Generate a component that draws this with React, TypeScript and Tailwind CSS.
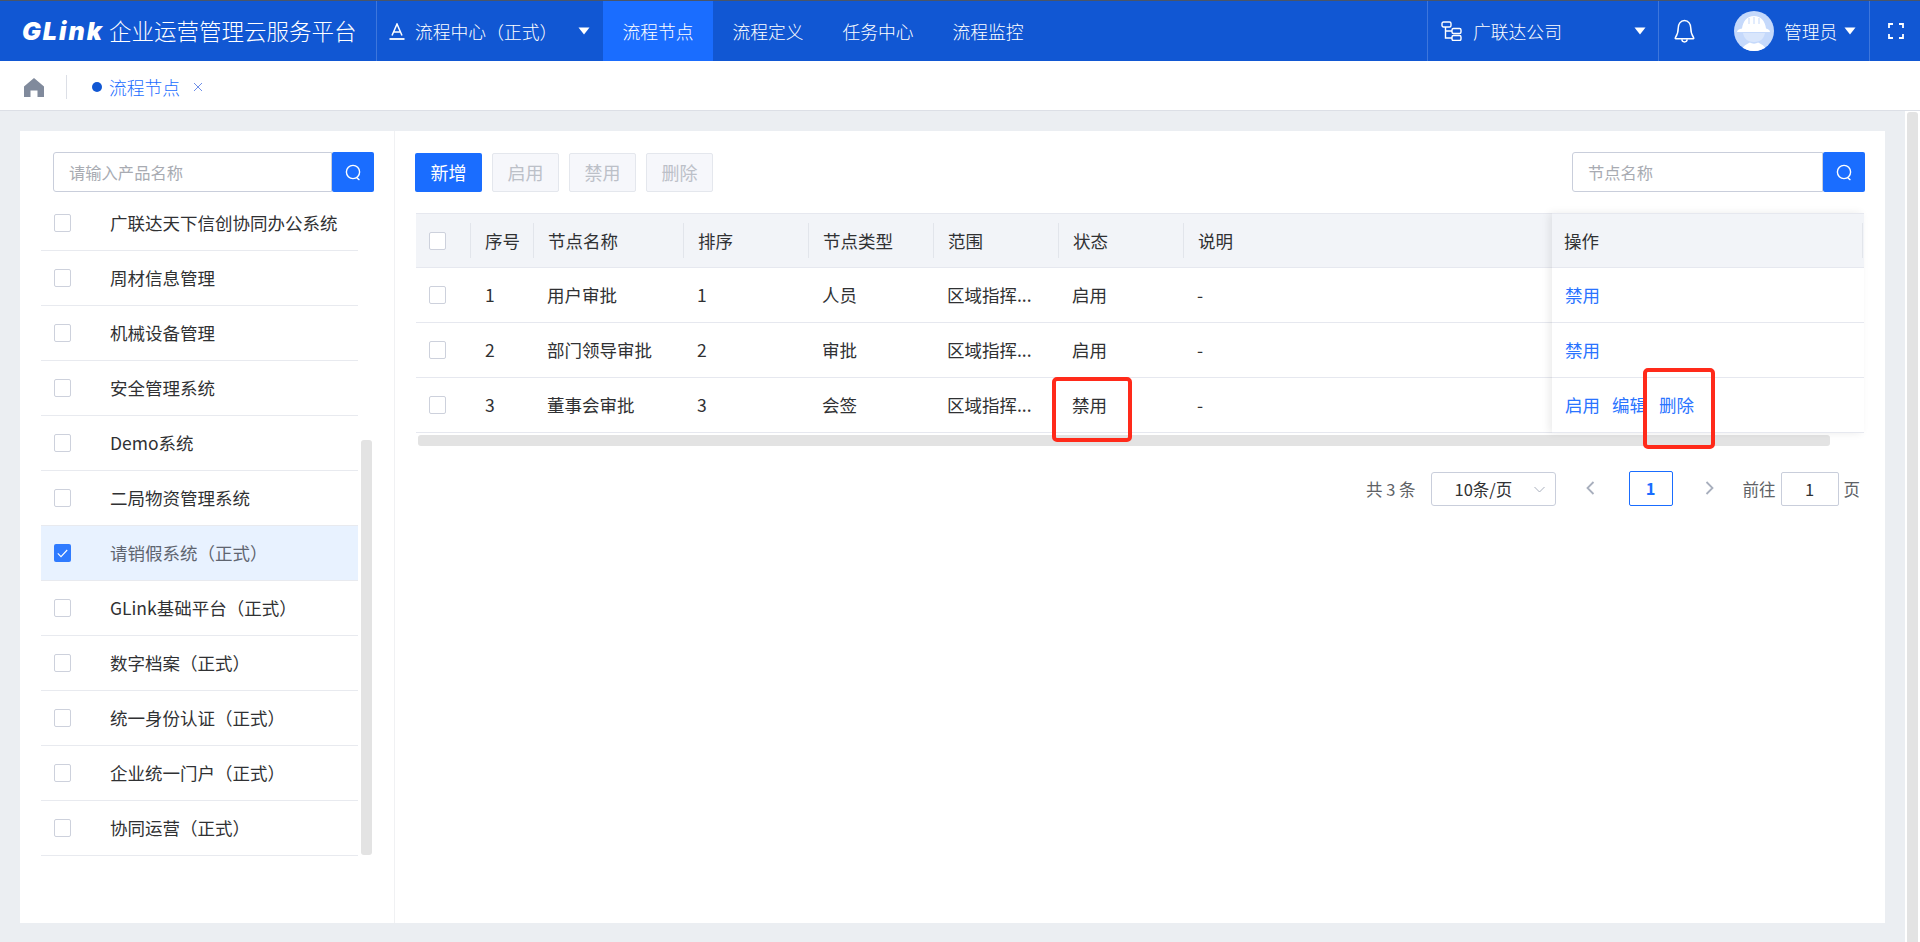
const PRODUCTS = [
  '广联达天下信创协同办公系统',
  '周材信息管理',
  '机械设备管理',
  '安全管理系统',
  'Demo系统',
  '二局物资管理系统',
  '请销假系统（正式）',
  'GLink基础平台（正式）',
  '数字档案（正式）',
  '统一身份认证（正式）',
  '企业统一门户（正式）',
  '协同运营（正式）',
];

const COLUMNS = ['序号', '节点名称', '排序', '节点类型', '范围', '状态', '说明'];

const ROWS = [
  { id: '1', name: '用户审批', sort: '1', type: '人员', scope: '区域指挥...', status: '启用', note: '-', actions: ['禁用'] },
  { id: '2', name: '部门领导审批', sort: '2', type: '审批', scope: '区域指挥...', status: '启用', note: '-', actions: ['禁用'] },
  { id: '3', name: '董事会审批', sort: '3', type: '会签', scope: '区域指挥...', status: '禁用', note: '-', actions: ['启用', '编辑', '删除'] },
];

function Caret() {
  return (
    <svg width="12" height="8" viewBox="0 0 12 8" className="shrink-0">
      <path d="M0.5 0.5H11.5L6 7.5Z" fill="#fff" />
    </svg>
  );
}

function SearchIcon() {
  return (
    <svg width="17" height="17" viewBox="0 0 17 17" fill="none" stroke="#fff" strokeWidth="1.4">
      <circle cx="8" cy="8" r="6.6" />
      <path d="M11.8 13.8L14 15.6" strokeLinecap="round" />
    </svg>
  );
}

function Checkbox({ checked = false }: { checked?: boolean }) {
  if (checked) {
    return (
      <span className="flex h-[18px] w-[17px] shrink-0 items-center justify-center rounded-[2px] bg-[#2f7bff]">
        <svg width="11" height="9" viewBox="0 0 11 9" fill="none" stroke="#fff" strokeWidth="1.1">
          <path d="M0.8 4.4L4 7.6L10.2 1" />
        </svg>
      </span>
    );
  }
  return <span className="block h-[18px] w-[17px] shrink-0 rounded-[2px] border border-[#cdd1dc] bg-white" />;
}

function SearchBox({ placeholder, className }: { placeholder: string; className: string }) {
  return (
    <div className={`flex h-10 ${className}`}>
      <div className="flex flex-1 items-center rounded-l-[3px] border border-[#c9cedb] bg-white pl-[15px] text-[16.3px] text-[#a8abb2]">
        {placeholder}
      </div>
      <button className="flex w-[42px] items-center justify-center rounded-[2px] bg-[#1a6dff]">
        <SearchIcon />
      </button>
    </div>
  );
}

function ToolButton({ label, primary = false }: { label: string; primary?: boolean }) {
  return (
    <button
      className={
        primary
          ? 'h-[39px] w-[67px] rounded-[2px] bg-[#1a6dff] text-[18px] text-white'
          : 'h-[39px] w-[67px] rounded-[2px] border border-[#e4e7ed] bg-[#f6f7fb] text-[18px] text-[#bcc0c8]'
      }
    >
      {label}
    </button>
  );
}

function Header() {
  return (
    <header className="flex h-[60px] shrink-0 items-stretch bg-[#1157d3] text-[17.8px] text-white">
      <div className="flex w-[376px] items-center pl-[22px]">
        <span className="w-[87px] font-['Inter',sans-serif] text-[25px] leading-none font-black tracking-[2px] italic">GLink</span>
        <span className="text-[22.5px] font-light whitespace-nowrap">企业运营管理云服务平台</span>
      </div>
      <div className="flex w-[227px] items-center border-l border-[#3d76dc] pl-[12px]">
        <svg width="16" height="17" viewBox="0 0 16 17" fill="none" stroke="#fff" strokeWidth="1.5" className="shrink-0">
          <path d="M3 12.5L8 1L13 12.5M4.5 9H11.5" />
          <path d="M0.5 16H15.5" strokeWidth="1.8" />
        </svg>
        <span className="ml-[10px] font-light whitespace-nowrap">流程中心（正式）</span>
        <span className="mr-[13px] ml-auto">
          <Caret />
        </span>
      </div>
      <nav className="flex items-stretch">
        {['流程节点', '流程定义', '任务中心', '流程监控'].map((tab, i) => (
          <span key={tab} className={`flex w-[110px] items-center justify-center font-light ${i === 0 ? 'bg-[#1a6dff]' : ''}`}>
            {tab}
          </span>
        ))}
      </nav>
      <div className="flex-1" />
      <div className="flex w-[231px] items-center border-l border-[#3d76dc] pl-[13px]">
        <svg width="21" height="20" viewBox="0 0 21 20" fill="none" stroke="#fff" strokeWidth="1.4" className="shrink-0">
          <rect x="1" y="1" width="9" height="5" rx="1.5" />
          <rect x="11" y="7.5" width="9" height="5" rx="1.5" />
          <rect x="11" y="14.5" width="9" height="5" rx="1.5" />
          <path d="M4.5 6V17H11M4.5 10H11" />
        </svg>
        <span className="ml-[11px] font-light">广联达公司</span>
        <span className="mr-3 ml-auto">
          <Caret />
        </span>
      </div>
      <div className="flex w-[211px] items-center border-l border-[#3d76dc] pl-[15px]">
        <svg width="21" height="25" viewBox="0 0 20 24" fill="none" stroke="#fff" strokeWidth="1.4" className="shrink-0">
          <path d="M10 1.5C6 1.5 4 5 4 8.5C4 13 3 15.5 1.2 18a.6.6 0 0 0 .5 1H18.3a.6.6 0 0 0 .5-1C17 15.5 16 13 16 8.5C16 5 14 1.5 10 1.5Z" />
          <path d="M7.5 19.5a2.5 2.5 0 0 0 5 0" />
        </svg>
        <svg width="40" height="40" viewBox="0 0 40 40" className="ml-[39px] shrink-0">
          <defs>
            <clipPath id="avatar-clip">
              <circle cx="20" cy="20" r="20" />
            </clipPath>
          </defs>
          <circle cx="20" cy="20" r="20" fill="#c5d9fb" />
          <g clipPath="url(#avatar-clip)" fill="#fff">
            <path d="M3 21C3 19 5 18 8 17.5C9 10 13 5 20 5C27 5 31 10 32 17.5C34 18 36 19 36 21Z" />
            <path d="M9 22H31C30 27 27 31 20 31C13 31 10 27 9 22Z" fill="#d9e6fc" />
            <path d="M7 41C8 35 13 33 16 31.5C18 33 22 33 24 31.5C27 33 32 35 33 41Z" />
            <path d="M15 7V13M20 6V13M25 7V13" stroke="#c5d9fb" strokeWidth="1" fill="none" />
          </g>
        </svg>
        <span className="ml-[10px] font-light">管理员</span>
        <span className="ml-[7px]">
          <Caret />
        </span>
      </div>
      <div className="flex w-[51px] items-center border-l border-[#3d76dc] pl-[18px]">
        <svg width="16" height="16" viewBox="0 0 16 16" fill="none" stroke="#fff" strokeWidth="1.8">
          <path d="M1 5V1H5M11 1H15V5M15 11V15H11M5 15H1V11" />
        </svg>
      </div>
    </header>
  );
}

function TabBar() {
  return (
    <div className="flex h-[50px] shrink-0 items-center border-b border-[#dcdfe6] bg-white pt-[3px]">
      <svg width="20" height="19" viewBox="0 0 20 19" className="ml-6 shrink-0">
        <path d="M10 0L20 8.5V19H13.5V12.5H6.5V19H0V8.5Z" fill="#808a9c" />
      </svg>
      <span className="ml-[22px] h-[24px] w-px bg-[#dcdfe6]" />
      <span className="ml-[25px] h-[10px] w-[10px] rounded-full bg-[#1157d3]" />
      <span className="ml-[7px] text-[17.8px] font-light text-[#1a6dff]">流程节点</span>
      <svg width="10" height="10" viewBox="0 0 10 10" fill="none" stroke="#6f8fe8" strokeWidth="1" className="ml-[13px]">
        <path d="M1 1L9 9M9 1L1 9" />
      </svg>
    </div>
  );
}

function ProductPanel() {
  return (
    <aside className="flex w-[375px] shrink-0 flex-col border-r border-[#f0f1f3] pt-[21px]">
      <SearchBox placeholder="请输入产品名称" className="ml-[33px] w-[321px]" />
      <div className="mt-1 flex pl-[21px]">
        <ul className="w-[317px]">
          {PRODUCTS.map((name) => {
            const selected = name === '请销假系统（正式）';
            return (
              <li
                key={name}
                className={`flex h-[55px] items-center border-b border-[#e8eaef] pl-[13px] text-[17.5px] ${selected ? 'bg-[#e8f2ff] text-[#5f6570]' : 'text-[#303133]'}`}
              >
                <Checkbox checked={selected} />
                <span className="ml-[39px] whitespace-nowrap">{name}</span>
              </li>
            );
          })}
        </ul>
        <div className="mt-[244px] ml-[3px] h-[415px] w-[11px] rounded-[3px] bg-[#e3e3e3]" />
      </div>
    </aside>
  );
}

function NodeTable() {
  return (
    <div>
      <div className="flex">
        <div className="w-[1136px] shrink-0">
          <div className="grid h-[55px] grid-cols-[55px_63px_150px_125px_125px_125px_125px_368px] items-center border-y border-[#e6e8ef] bg-[#f2f4f8] text-[#303133]">
            <div className="pl-[13px]">
              <Checkbox />
            </div>
            {COLUMNS.map((col) => (
              <div key={col} className="-ml-px flex h-[35px] items-center border-l border-[#e2e5eb] pt-[2px] pl-[14px]">
                {col}
              </div>
            ))}
          </div>
          {ROWS.map((row) => (
            <div
              key={row.id}
              className="grid h-[55px] grid-cols-[55px_63px_150px_125px_125px_125px_125px_368px] items-center border-b border-[#e6e8ef] text-[#303133]"
            >
              <div className="pl-[13px]">
                <Checkbox />
              </div>
              <div className="pl-[14px]">{row.id}</div>
              <div className="pl-[13px]">{row.name}</div>
              <div className="pl-[13px]">{row.sort}</div>
              <div className="pl-[13px]">{row.type}</div>
              <div className="pl-[13px] whitespace-nowrap">{row.scope}</div>
              <div className="pl-[13px]">{row.status}</div>
              <div className="pl-[13px]">{row.note}</div>
            </div>
          ))}
        </div>
        <div className="relative z-10 w-[312px] shrink-0 bg-white shadow-[-3px_0_8px_rgba(0,0,0,0.08)]">
          <div className="flex h-[55px] items-center border-y border-[#e6e8ef] bg-[#f2f4f8] pr-px pl-[12px]">
            <div className="flex h-[35px] w-full items-center border-r border-[#e2e5eb] pt-[2px] text-[#303133]">操作</div>
          </div>
          {ROWS.map((row) => (
            <div key={row.id} className="flex h-[55px] items-center gap-3 border-b border-[#e6e8ef] pl-[13px] text-[#2a74ff]">
              {row.actions.map((action) => (
                <span key={action}>{action}</span>
              ))}
            </div>
          ))}
        </div>
      </div>
      <div className="mt-[2px] ml-[2px] h-[11px] w-[1412px] rounded-[3px] bg-[#e3e3e3]" />
    </div>
  );
}

function Pagination() {
  return (
    <div className="mt-[26px] flex w-[1448px] items-start justify-end pr-1 text-[16.5px] text-[#606266]">
      <span className="flex h-[34px] items-center whitespace-nowrap">共 3 条</span>
      <div className="ml-[15px] flex h-[34px] w-[125px] items-center rounded-[3px] border border-[#c9cedb] pl-[23px] text-[#303133]">
        10条/页
        <svg width="11" height="7" viewBox="0 0 11 7" fill="none" stroke="#a8afbd" strokeWidth="1" className="mr-[10px] ml-auto">
          <path d="M0.5 1L5.5 6L10.5 1" />
        </svg>
      </div>
      <svg width="9" height="14" viewBox="0 0 9 14" fill="none" stroke="#a8afbd" strokeWidth="1.8" className="mt-[9px] ml-[30px]">
        <path d="M7.5 1L1.5 7L7.5 13" />
      </svg>
      <span className="-mt-px ml-[34px] flex h-[35px] w-[44px] items-center justify-center rounded-[2px] border border-[#1a6dff] font-bold text-[#1a6dff]">1</span>
      <svg width="9" height="14" viewBox="0 0 9 14" fill="none" stroke="#a8afbd" strokeWidth="1.8" className="mt-[9px] ml-[32px]">
        <path d="M1.5 1L7.5 7L1.5 13" />
      </svg>
      <span className="ml-[29px] flex h-[34px] items-center">前往</span>
      <span className="ml-[5px] flex h-[34px] w-[58px] items-center justify-center rounded-[2px] border border-[#c9cedb] text-[#303133]">1</span>
      <span className="ml-[5px] flex h-[34px] items-center">页</span>
    </div>
  );
}

export default function App() {
  return (
    <div className="relative flex h-screen flex-col overflow-hidden bg-white font-['Noto_Sans_CJK_SC','Noto_Sans',sans-serif]">
      <div className="h-px shrink-0 bg-[#4a5568]" />
      <Header />
      <TabBar />
      <div className="flex min-h-0 flex-1">
        <main className="min-w-0 flex-1 bg-[#ebeef2] pt-5 pr-5 pb-[19px] pl-5">
          <div className="flex h-full bg-white">
            <ProductPanel />
            <section className="min-w-0 flex-1 pt-[21px] pl-[21px] text-[17.5px]">
              <div className="-ml-px flex items-start justify-between pr-[20px]">
                <div className="mt-px flex gap-[10px]">
                  <ToolButton label="新增" primary />
                  <ToolButton label="启用" />
                  <ToolButton label="禁用" />
                  <ToolButton label="删除" />
                </div>
                <SearchBox placeholder="节点名称" className="w-[293px]" />
              </div>
              <div className="mt-[21px]">
                <NodeTable />
                <Pagination />
              </div>
            </section>
          </div>
        </main>
        <div className="w-[15px] shrink-0 bg-white pt-px pr-[2px] pl-[2px]">
          <div className="h-full rounded-t-[3px] bg-[#e3e3e3]" />
        </div>
      </div>
      <div className="absolute top-[377px] left-[1052px] z-20 h-[65px] w-[80px] rounded-[5px] border-4 border-[#ff2a1a]" />
      <div className="absolute top-[368px] left-[1643px] z-20 h-[81px] w-[72px] rounded-[5px] border-4 border-[#ff2a1a]" />
    </div>
  );
}
